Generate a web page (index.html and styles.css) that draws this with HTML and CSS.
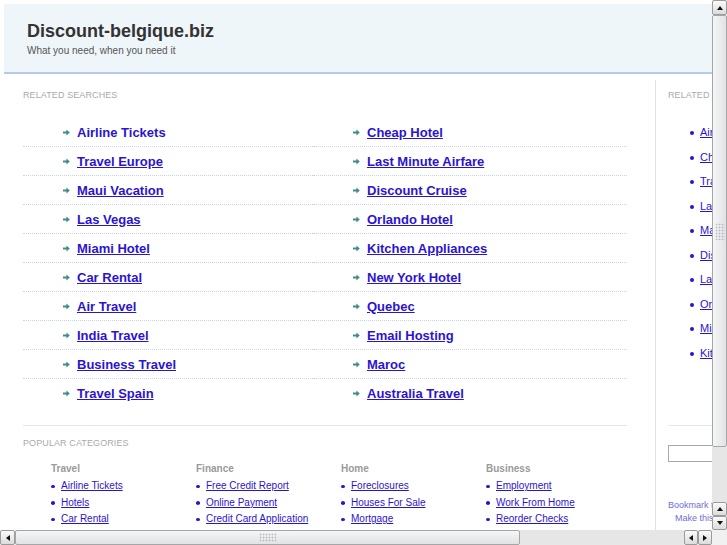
FILE: index.html
```html
<!DOCTYPE html>
<html lang="en">
<head>
<meta charset="utf-8">
<title>Discount-belgique.biz</title>
<link rel="stylesheet" href="styles.css">
</head>
<body>
<div class="window">
  <div class="viewport">
    <div class="page">
      <header class="masthead">
        <h1>Discount-belgique.biz</h1>
        <p class="tagline">What you need, when you need it</p>
      </header>
      <div class="content">
        <main class="main">
          <h2 class="label">Related Searches</h2>
          <ul class="searches">
            <li><svg class="arrow" viewBox="0 0 7 7"><path d="M0 2.6h3.4V0.6L6.8 3.5 3.4 6.4V4.4H0z"/></svg><a href="#" class="plain">Airline Tickets</a></li>
            <li><svg class="arrow" viewBox="0 0 7 7"><path d="M0 2.6h3.4V0.6L6.8 3.5 3.4 6.4V4.4H0z"/></svg><a href="#">Travel Europe</a></li>
            <li><svg class="arrow" viewBox="0 0 7 7"><path d="M0 2.6h3.4V0.6L6.8 3.5 3.4 6.4V4.4H0z"/></svg><a href="#">Maui Vacation</a></li>
            <li><svg class="arrow" viewBox="0 0 7 7"><path d="M0 2.6h3.4V0.6L6.8 3.5 3.4 6.4V4.4H0z"/></svg><a href="#">Las Vegas</a></li>
            <li><svg class="arrow" viewBox="0 0 7 7"><path d="M0 2.6h3.4V0.6L6.8 3.5 3.4 6.4V4.4H0z"/></svg><a href="#">Miami Hotel</a></li>
            <li><svg class="arrow" viewBox="0 0 7 7"><path d="M0 2.6h3.4V0.6L6.8 3.5 3.4 6.4V4.4H0z"/></svg><a href="#">Car Rental</a></li>
            <li><svg class="arrow" viewBox="0 0 7 7"><path d="M0 2.6h3.4V0.6L6.8 3.5 3.4 6.4V4.4H0z"/></svg><a href="#">Air Travel</a></li>
            <li><svg class="arrow" viewBox="0 0 7 7"><path d="M0 2.6h3.4V0.6L6.8 3.5 3.4 6.4V4.4H0z"/></svg><a href="#">India Travel</a></li>
            <li><svg class="arrow" viewBox="0 0 7 7"><path d="M0 2.6h3.4V0.6L6.8 3.5 3.4 6.4V4.4H0z"/></svg><a href="#">Business Travel</a></li>
            <li><svg class="arrow" viewBox="0 0 7 7"><path d="M0 2.6h3.4V0.6L6.8 3.5 3.4 6.4V4.4H0z"/></svg><a href="#">Travel Spain</a></li>
            <li><svg class="arrow" viewBox="0 0 7 7"><path d="M0 2.6h3.4V0.6L6.8 3.5 3.4 6.4V4.4H0z"/></svg><a href="#">Cheap Hotel</a></li>
            <li><svg class="arrow" viewBox="0 0 7 7"><path d="M0 2.6h3.4V0.6L6.8 3.5 3.4 6.4V4.4H0z"/></svg><a href="#">Last Minute Airfare</a></li>
            <li><svg class="arrow" viewBox="0 0 7 7"><path d="M0 2.6h3.4V0.6L6.8 3.5 3.4 6.4V4.4H0z"/></svg><a href="#">Discount Cruise</a></li>
            <li><svg class="arrow" viewBox="0 0 7 7"><path d="M0 2.6h3.4V0.6L6.8 3.5 3.4 6.4V4.4H0z"/></svg><a href="#">Orlando Hotel</a></li>
            <li><svg class="arrow" viewBox="0 0 7 7"><path d="M0 2.6h3.4V0.6L6.8 3.5 3.4 6.4V4.4H0z"/></svg><a href="#">Kitchen Appliances</a></li>
            <li><svg class="arrow" viewBox="0 0 7 7"><path d="M0 2.6h3.4V0.6L6.8 3.5 3.4 6.4V4.4H0z"/></svg><a href="#">New York Hotel</a></li>
            <li><svg class="arrow" viewBox="0 0 7 7"><path d="M0 2.6h3.4V0.6L6.8 3.5 3.4 6.4V4.4H0z"/></svg><a href="#">Quebec</a></li>
            <li><svg class="arrow" viewBox="0 0 7 7"><path d="M0 2.6h3.4V0.6L6.8 3.5 3.4 6.4V4.4H0z"/></svg><a href="#">Email Hosting</a></li>
            <li><svg class="arrow" viewBox="0 0 7 7"><path d="M0 2.6h3.4V0.6L6.8 3.5 3.4 6.4V4.4H0z"/></svg><a href="#">Maroc</a></li>
            <li><svg class="arrow" viewBox="0 0 7 7"><path d="M0 2.6h3.4V0.6L6.8 3.5 3.4 6.4V4.4H0z"/></svg><a href="#">Australia Travel</a></li>
          </ul>
          <hr class="rule">
          <h2 class="label">Popular Categories</h2>
          <div class="cats">
            <div class="cat">
              <h3>Travel</h3>
              <ul>
                <li><a href="#">Airline Tickets</a></li>
                <li><a href="#">Hotels</a></li>
                <li><a href="#">Car Rental</a></li>
              </ul>
            </div>
            <div class="cat">
              <h3>Finance</h3>
              <ul>
                <li><a href="#">Free Credit Report</a></li>
                <li><a href="#">Online Payment</a></li>
                <li><a href="#">Credit Card Application</a></li>
              </ul>
            </div>
            <div class="cat">
              <h3>Home</h3>
              <ul>
                <li><a href="#">Foreclosures</a></li>
                <li><a href="#">Houses For Sale</a></li>
                <li><a href="#">Mortgage</a></li>
              </ul>
            </div>
            <div class="cat">
              <h3>Business</h3>
              <ul>
                <li><a href="#">Employment</a></li>
                <li><a href="#">Work From Home</a></li>
                <li><a href="#">Reorder Checks</a></li>
              </ul>
            </div>
          </div>
        </main>
        <aside class="side">
          <h2 class="label">Related Searches</h2>
          <ul class="side-list">
            <li><a href="#">Airline Tickets</a></li>
            <li><a href="#">Cheap Hotel</a></li>
            <li><a href="#">Travel Europe</a></li>
            <li><a href="#">Last Minute Airfare</a></li>
            <li><a href="#">Maui Vacation</a></li>
            <li><a href="#">Discount Cruise</a></li>
            <li><a href="#">Las Vegas</a></li>
            <li><a href="#">Orlando Hotel</a></li>
            <li><a href="#">Miami Hotel</a></li>
            <li><a href="#">Kitchen Appliances</a></li>
          </ul>
          <hr class="side-rule">
          <form class="search"><input type="text" class="search-box" aria-label="Search"></form>
          <div class="bookmark">
            <a href="#">Bookmark this page</a>
            <a href="#" class="indent">Make this your homepage</a>
          </div>
        </aside>
      </div>
    </div>
  </div>
  <div class="vscroll">
    <div class="sb-btn up"></div>
    <div class="thumb v-thumb"><div class="grip"></div></div>
    <div class="track"></div>
    <div class="sb-btn up small"></div>
    <div class="sb-btn down small"></div>
  </div>
  <div class="hscroll">
    <div class="sb-btn left"></div>
    <div class="thumb h-thumb"><div class="grip grip-h"></div></div>
    <div class="track"></div>
    <div class="sb-btn left small"></div>
    <div class="sb-btn right small"></div>
  </div>
  <div class="corner"></div>
</div>
</body>
</html>
```

FILE: styles.css
```css
html, body {
  margin: 0;
  padding: 0;
  overflow: hidden;
  background: #fff;
}

body {
  font-family: "Liberation Sans", Arial, sans-serif;
}

a {
  color: #2b14cf;
  text-decoration: underline;
}

.window {
  width: 727px;
  height: 545px;
  display: grid;
  grid-template-columns: 712px 15px;
  grid-template-rows: 530px 15px;
}

.viewport {
  overflow: hidden;
  background: #fff;
}

.page {
  width: 900px;
  padding: 4px 0 0 4px;
}

/* header */
.masthead {
  background: #eff6f9;
  border-bottom: 2px solid #b6caeb;
  padding: 16px 23px 14px;
}

.masthead h1 {
  margin: 0;
  font-size: 18px;
  line-height: 22px;
  font-weight: bold;
  color: #333;
}

.tagline {
  margin: 2px 0 0;
  font-size: 10px;
  line-height: 14px;
  color: #555;
}

/* content */
.content {
  display: flex;
  margin-top: 6px;
}

.main {
  flex: none;
  width: 604px;
  padding: 9px 28px 30px 19px;
  border-right: 1px solid #d6e1f1;
}

.label {
  margin: 0;
  font-size: 9px;
  line-height: 12px;
  font-weight: normal;
  color: #aaa;
  text-transform: uppercase;
  letter-spacing: 0.1px;
}

.searches {
  list-style: none;
  margin: 17px 0 0;
  padding: 0;
  display: grid;
  grid-template-columns: 290px 314px;
  grid-template-rows: repeat(10, auto);
  grid-auto-flow: column;
}

.searches li {
  height: 28px;
  display: flex;
  align-items: center;
  padding-left: 40px;
  border-bottom: 1px dotted #c4d4ec;
  font-size: 13px;
  font-weight: bold;
}

.searches li:nth-child(10),
.searches li:nth-child(20) {
  border-bottom: none;
}

.arrow {
  width: 7px;
  height: 7px;
  margin-right: 7px;
  fill: #3f8d86;
  flex: none;
}

.searches a.plain {
  text-decoration: none;
}

.rule {
  border: 0;
  border-top: 1px solid #e0e8f2;
  margin: 18px 0 11px;
  height: 0;
}

.cats {
  display: grid;
  grid-template-columns: repeat(4, 145px);
  padding-left: 28px;
  margin-top: 13px;
}

.cat h3 {
  margin: 0 0 3px;
  font-size: 10px;
  line-height: 13px;
  font-weight: bold;
  color: #9a9a9a;
}

.cat ul {
  list-style: none;
  margin: 0;
  padding: 0;
}

.cat li {
  font-size: 10px;
  line-height: 16.5px;
}

.cat li::before {
  content: "";
  display: inline-block;
  width: 4px;
  height: 3.5px;
  border-radius: 50%;
  background: #2b14cf;
  margin-right: 6px;
  vertical-align: middle;
}

/* side column */
.side {
  flex: 1;
  padding: 9px 0 0 12px;
}

.side-list {
  list-style: none;
  margin: 19px 0 0;
  padding-left: 22px;
}

.side-list li {
  font-size: 11px;
  line-height: 24.5px;
}

.side-list li::before {
  content: "";
  display: inline-block;
  width: 4px;
  height: 4px;
  border-radius: 50%;
  background: #2b14cf;
  margin-right: 6px;
  vertical-align: middle;
}

.side-rule {
  border: 0;
  border-top: 1px solid #e0e8f2;
  margin: 60px 0 19px;
  width: 200px;
  height: 0;
}

.search {
  margin: 0;
}

.search-box {
  display: block;
  box-sizing: border-box;
  width: 190px;
  height: 17px;
  margin: 0;
  padding: 0 3px;
  border: 1px solid #a9a9a9;
  background: #fff;
}

.bookmark {
  margin-top: 37px;
  display: flex;
  flex-direction: column;
  align-items: flex-start;
}

.bookmark a {
  font-size: 9px;
  line-height: 13px;
  color: #6e6ed6;
  text-decoration: none;
}

.bookmark .indent {
  padding-left: 7px;
}

/* scrollbars */
.vscroll {
  display: flex;
  flex-direction: column;
  background: #f2f2f2;
}

.hscroll {
  display: flex;
  background: #f2f2f2;
}

.sb-btn {
  flex: none;
  width: 15px;
  height: 15px;
  box-sizing: border-box;
  border: 1px solid #9b9b9b;
  border-radius: 2px;
  background: linear-gradient(#fbfbfb, #dcdcdc);
  display: flex;
  align-items: center;
  justify-content: center;
}

.vscroll .small {
  height: 14px;
}

.hscroll .small {
  width: 14px;
}

.sb-btn::after {
  content: "";
  width: 0;
  height: 0;
}

.up::after {
  border-left: 3.5px solid transparent;
  border-right: 3.5px solid transparent;
  border-bottom: 4px solid #111;
}

.down::after {
  border-left: 3.5px solid transparent;
  border-right: 3.5px solid transparent;
  border-top: 4px solid #111;
}

.left::after {
  border-top: 3.5px solid transparent;
  border-bottom: 3.5px solid transparent;
  border-right: 4px solid #111;
}

.right::after {
  border-top: 3.5px solid transparent;
  border-bottom: 3.5px solid transparent;
  border-left: 4px solid #111;
}

.thumb {
  flex: none;
  box-sizing: border-box;
  border: 1px solid #a6a6a6;
  border-radius: 2px;
  display: flex;
  align-items: center;
  justify-content: center;
}

.v-thumb {
  height: 432px;
  background: linear-gradient(to right, #f5f6f7, #e0e2e5);
}

.h-thumb {
  width: 505px;
  background: linear-gradient(#f5f6f7, #e0e2e5);
}

.grip {
  width: 10px;
  height: 17px;
  background-image: radial-gradient(circle, #b9b9b9 0.8px, transparent 1.1px);
  background-size: 3px 3px;
}

.grip-h {
  width: 18px;
  height: 9px;
}

.track {
  flex: 1;
  background-color: #f1f1f1;
  background-image: radial-gradient(circle, #dadada 0.6px, transparent 0.8px);
  background-size: 2px 2px;
}

.corner {
  background: #f1f1f1;
}
```
